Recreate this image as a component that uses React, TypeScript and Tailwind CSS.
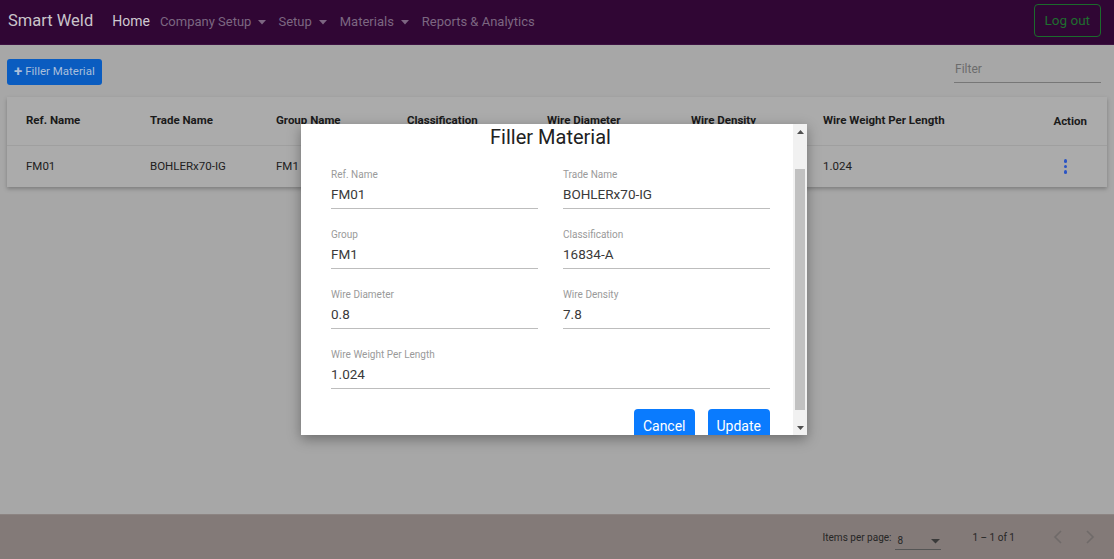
import React from "react";

const font = { fontFamily: "Roboto, 'Liberation Sans', sans-serif" };

function Caret({ color = "currentColor" }: { color?: string }) {
  return (
    <svg width="8" height="5" viewBox="0 0 8 5" className="ml-[7px] mt-[1px]">
      <path d="M0 0 L8 0 L4 4.5 Z" fill={color} />
    </svg>
  );
}

function Field({ label, value, full }: { label: string; value: string; full?: boolean }) {
  return (
    <div className={full ? "col-span-2" : ""}>
      <div className="text-[10px] leading-[12px] text-[#9a9a9a]">{label}</div>
      <div className="mt-[5px] text-[13.5px] leading-[16px] text-[#3a3a3a] pb-[6px] border-b border-[#bdbdbd]">{value}</div>
    </div>
  );
}

export default function App() {
  const cols = [
    { h: "Ref. Name", v: "FM01", w: "w-[124px]" },
    { h: "Trade Name", v: "BOHLERx70-IG", w: "w-[126px]" },
    { h: "Group Name", v: "FM1", w: "w-[131px]" },
    { h: "Classification", v: "16834-A", w: "w-[140px]" },
    { h: "Wire Diameter", v: "0.8", w: "w-[144px]" },
    { h: "Wire Density", v: "7.8", w: "w-[132px]" },
    { h: "Wire Weight Per Length", v: "1.024", w: "flex-1" },
  ];
  return (
    <div className="relative w-[1114px] h-[559px] overflow-hidden bg-[#a7a7a7] flex flex-col" style={font}>
      {/* navbar */}
      <div className="h-[45px] shrink-0 bg-[#300634] border-b border-[#3d1242] flex items-center pl-[8px] pr-[13px]">
        <div className="text-[16.5px] text-[#c9c4ca] mr-[19px] mt-[-1px]">Smart Weld</div>
        <div className="flex items-center text-[13px] text-[#7c6681] mt-[-1px]">
          <span className="text-[14px] text-[#cfc9d0] mr-[10px]">Home</span>
          <span className="flex items-center mr-[12px]">Company Setup<Caret /></span>
          <span className="flex items-center mr-[13px]">Setup<Caret /></span>
          <span className="flex items-center mr-[13px]">Materials<Caret /></span>
          <span>Reports &amp; Analytics</span>
        </div>
        <div className="ml-auto mt-[-3px] h-[33px] px-[10px] border border-[#1b6b2c] rounded-[4px] text-[13.5px] text-[#1f6e2f] flex items-center">Log out</div>
      </div>

      {/* toolbar */}
      <div className="flex items-start pl-[7px] pr-[13px] pt-[14px] h-[52px] shrink-0">
        <div className="h-[26px] px-[7px] bg-[#0a5cc0] rounded-[3px] text-[11.5px] text-[#a9bfdb] flex items-center gap-[3px]">
          <span className="text-[15px] font-bold leading-none mt-[-1px]">+</span>Filler Material
        </div>
        <div className="ml-auto mt-[1px] w-[147px] border-b border-[#777] pb-[4px] text-[12px] text-[#6c6c6c] pl-[1px]">Filter</div>
      </div>

      {/* table */}
      <div className="mx-[7px] bg-[#ababab] shadow-[0_2px_4px_rgba(0,0,0,0.25)]">
        <div className="h-[49px] flex items-center pl-[19px] pr-[19px] border-b border-[#9f9f9f] text-[11.5px] font-bold text-[#1a1a1a]">
          {cols.map((c) => (
            <div key={c.h} className={c.w}>{c.h}</div>
          ))}
          <div className="mr-[1px] mt-[1px]">Action</div>
        </div>
        <div className="h-[41px] flex items-center pl-[19px] pr-[40px] text-[11.5px] text-[#202020]">
          {cols.map((c) => (
            <div key={c.h} className={c.w}>{c.v}</div>
          ))}
          <div className="flex flex-col gap-[2px]">
            <div className="w-[3.5px] h-[3.5px] rounded-full bg-[#2a54c4]" />
            <div className="w-[3.5px] h-[3.5px] rounded-full bg-[#2a54c4]" />
            <div className="w-[3.5px] h-[3.5px] rounded-full bg-[#2a54c4]" />
          </div>
        </div>
      </div>

      <div className="flex-1" />

      {/* footer */}
      <div className="h-[45px] shrink-0 bg-[#837a78] border-t border-[#8c8482] flex items-center text-[10px] text-[#262626]">
        <div className="ml-auto flex items-center">
          <span>Items per page:</span>
          <div className="ml-[4px] w-[46px] h-[20px] flex items-end justify-between border-b border-[#555] pb-[3px] pl-[2px] pr-[1px] mt-[6px]">
            <span className="leading-none">8</span>
            <svg width="9" height="5" viewBox="0 0 9 5" className="mb-[2px]"><path d="M0 0 L9 0 L4.5 4.5 Z" fill="#3a3a3a" /></svg>
          </div>
          <span className="ml-[31px]">1 – 1 of 1</span>
          <svg width="10" height="14" viewBox="0 0 10 14" className="ml-[38px]"><path d="M8 1 L2 7 L8 13" stroke="#6f6a69" strokeWidth="1.6" fill="none" /></svg>
          <svg width="10" height="14" viewBox="0 0 10 14" className="ml-[22px] mr-[19px]"><path d="M2 1 L8 7 L2 13" stroke="#6f6a69" strokeWidth="1.6" fill="none" /></svg>
        </div>
      </div>

      {/* modal */}
      <div className="absolute left-[301px] top-[124px] w-[506px] h-[311px] bg-white shadow-[0_4px_12px_rgba(0,0,0,0.35)] flex overflow-hidden">
        <div className="flex-1 flex flex-col pl-[30px] pr-[23px]">
          <div className="text-center text-[20px] leading-[26px] text-[#212121]">Filler Material</div>
          <div className="grid grid-cols-2 gap-x-[25px] gap-y-[20px] mt-[19px]">
            <Field label="Ref. Name" value="FM01" />
            <Field label="Trade Name" value="BOHLERx70-IG" />
            <Field label="Group" value="FM1" />
            <Field label="Classification" value="16834-A" />
            <Field label="Wire Diameter" value="0.8" />
            <Field label="Wire Density" value="7.8" />
            <Field label="Wire Weight Per Length" value="1.024" full />
          </div>
          <div className="flex justify-end gap-[13px] mt-[20px]">
            <div className="h-[34px] px-[9px] bg-[#0a7bfe] rounded-[4px] text-white text-[14px] flex items-center">Cancel</div>
            <div className="h-[34px] px-[9px] bg-[#0a7bfe] rounded-[4px] text-white text-[14px] flex items-center">Update</div>
          </div>
        </div>
        <div className="w-[14px] bg-[#f1f1f1] flex flex-col items-center">
          <div className="h-[15px] flex items-center justify-center">
            <svg width="7" height="4" viewBox="0 0 7 4"><path d="M0 4 L7 4 L3.5 0 Z" fill="#505050" /></svg>
          </div>
          <div className="mt-[30px] w-[10px] h-[241px] bg-[#c1c1c1]" />
          <div className="flex-1" />
          <div className="h-[15px] flex items-center justify-center">
            <svg width="7" height="4" viewBox="0 0 7 4"><path d="M0 0 L7 0 L3.5 4 Z" fill="#505050" /></svg>
          </div>
        </div>
      </div>
    </div>
  );
}
